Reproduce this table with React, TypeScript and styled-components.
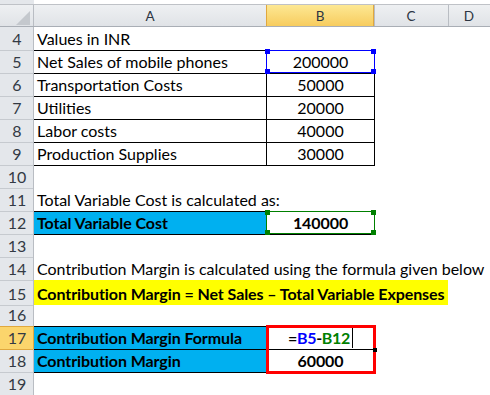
import React from 'react';
import styled, { createGlobalStyle, css } from 'styled-components';

const COLS = '34px 232px 108px 74px 1fr';
const HEAD_BG = '#e4e7eb';
const HEAD_LINE = '#b9bdc3';

const GlobalStyle = createGlobalStyle`
  html, body {
    margin: 0;
    padding: 0;
    background: #fff;
    overflow: hidden;
  }
`;

const Sheet = styled.div`
  position: relative;
  width: 490px;
  height: 395px;
  padding-top: 4px;
  box-sizing: border-box;
  overflow: hidden;
  font-family: Lato, 'Liberation Sans', sans-serif;
  background: linear-gradient(to right, ${HEAD_BG} 34px, #fff 34px);
`;

const HeaderRow = styled.div`
  display: grid;
  grid-template-columns: ${COLS};
  height: 23px;
  box-sizing: border-box;
  border-top: 1px solid #bfc2c7;
  border-bottom: 1px solid #a9aeb5;
  background: linear-gradient(#eef0f2, #e0e3e7);
`;

const Corner = styled.div`
  position: relative;
  box-shadow: inset -1px 0 0 ${HEAD_LINE};

  svg {
    position: absolute;
    right: 4px;
    bottom: 1px;
  }
`;

const ColHead = styled.div<{ $active?: boolean; $line?: boolean }>`
  display: flex;
  align-items: center;
  justify-content: center;
  font-size: 13.5px;
  color: #2c3542;
  ${({ $line }) => $line && css`box-shadow: inset 1px 0 0 ${HEAD_LINE};`}
  ${({ $active }) =>
    $active &&
    css`
      background: linear-gradient(#fde894, #f7cc5e);
      box-shadow: inset 1px 0 0 #e0a83e, inset -1px 0 0 #e0a83e;
    `}
`;

const Row = styled.div<{ $h?: number }>`
  display: grid;
  grid-template-columns: ${COLS};
  height: ${({ $h }) => $h ?? 23}px;
`;

const RowHead = styled.div<{ $active?: boolean }>`
  display: flex;
  align-items: flex-end;
  justify-content: center;
  padding-bottom: 2px;
  font-size: 16px;
  line-height: 19px;
  color: #333a44;
  box-shadow: inset -1px 0 0 ${HEAD_LINE}, 0 1px 0 #c6cacf;
  ${({ $active }) =>
    $active &&
    css`
      background: #fbd56c;
      box-shadow: inset -1px 0 0 #e0a83e, inset 0 1px 0 #e0a83e, 0 1px 0 #e0a83e;
    `}
`;

type Box = 'a' | 'b';

const boxLines: Record<Box, string> = {
  a: 'inset 0 1px 0 #000, 0 1px 0 #000',
  b: 'inset 0 1px 0 #000, inset 1px 0 0 #000, 1px 0 0 #000, 0 1px 0 #000, 1px 1px 0 #000',
};

const Cell = styled.div<{
  $fill?: string;
  $bold?: boolean;
  $center?: boolean;
  $box?: Box;
  $span?: number;
}>`
  display: flex;
  align-items: flex-end;
  justify-content: ${({ $center }) => ($center ? 'center' : 'flex-start')};
  padding: 0 2px 2px 3px;
  font-size: 16px;
  line-height: 19px;
  color: #000;
  white-space: nowrap;
  min-width: 0;
  font-weight: ${({ $bold }) => ($bold ? 700 : 400)};
  letter-spacing: ${({ $bold }) => ($bold ? '-0.08px' : 'normal')};
  background: ${({ $fill }) => $fill ?? 'transparent'};
  box-shadow: ${({ $box }) => ($box ? boxLines[$box] : 'none')};
  grid-column: span ${({ $span }) => $span ?? 1};
`;

const Formula = styled.span`
  display: inline-flex;
  align-items: flex-end;
  letter-spacing: -0.3px;
`;

const Ref = styled.span<{ $color: string }>`
  color: ${({ $color }) => $color};
`;

const Caret = styled.span`
  display: inline-block;
  width: 1px;
  height: 20px;
  margin: 0 0 -1px 2px;
  background: #000;
`;

const RefBox = styled.div<{ $color: string }>`
  position: absolute;
  box-sizing: border-box;
  border: 1px solid ${({ $color }) => $color};
`;

const Handle = styled.span<{ $color: string; $x: 'left' | 'right'; $y: 'top' | 'bottom' }>`
  position: absolute;
  width: 5px;
  height: 5px;
  background: ${({ $color }) => $color};
  ${({ $x }) => $x}: -2px;
  ${({ $y }) => $y}: -2px;
`;

const Highlight = styled.div`
  position: absolute;
  left: 266px;
  top: 325px;
  width: 110px;
  height: 49px;
  box-sizing: border-box;
  border: 3px solid #ff0000;
`;

const FillHandle = styled.div`
  position: absolute;
  left: 373px;
  top: 348px;
  width: 4px;
  height: 4px;
  background: #000;
`;

const CYAN = '#00b0f0';
const YELLOW = '#ffff00';
const BLUE = '#0000ff';
const GREEN = '#008000';

const RangeBox: React.FC<{ color: string; top: number }> = ({ color, top }) => (
  <RefBox $color={color} style={{ left: 266, top, width: 109, height: 23 }}>
    <Handle $color={color} $x="left" $y="top" />
    <Handle $color={color} $x="right" $y="top" />
    <Handle $color={color} $x="left" $y="bottom" />
    <Handle $color={color} $x="right" $y="bottom" />
  </RefBox>
);

const table: [string, string][] = [
  ['Net Sales of mobile phones', '200000'],
  ['Transportation Costs', '50000'],
  ['Utilities', '20000'],
  ['Labor costs', '40000'],
  ['Production Supplies', '30000'],
];

const App: React.FC = () => (
  <>
    <GlobalStyle />
    <Sheet>
      <HeaderRow>
        <Corner>
          <svg width="14" height="14" viewBox="0 0 14 14">
            <polygon points="14,0 14,14 0,14" fill="#c4c8cd" />
          </svg>
        </Corner>
        <ColHead>A</ColHead>
        <ColHead $active>B</ColHead>
        <ColHead $line>C</ColHead>
        <ColHead $line>D</ColHead>
      </HeaderRow>

      <Row>
        <RowHead>4</RowHead>
        <Cell>Values in INR</Cell>
      </Row>
      {table.map(([label, value], i) => (
        <Row key={label}>
          <RowHead>{i + 5}</RowHead>
          <Cell $box="a">{label}</Cell>
          <Cell $box="b" $center>
            {value}
          </Cell>
        </Row>
      ))}
      <Row>
        <RowHead>10</RowHead>
      </Row>
      <Row>
        <RowHead>11</RowHead>
        <Cell>Total Variable Cost is calculated as:</Cell>
      </Row>
      <Row>
        <RowHead>12</RowHead>
        <Cell $box="a" $fill={CYAN} $bold>
          Total Variable Cost
        </Cell>
        <Cell $box="b" $bold $center>
          140000
        </Cell>
      </Row>
      <Row>
        <RowHead>13</RowHead>
      </Row>
      <Row>
        <RowHead>14</RowHead>
        <Cell>Contribution Margin is calculated using the formula given below</Cell>
      </Row>
      <Row $h={25}>
        <RowHead>15</RowHead>
        <Cell $fill={YELLOW} $bold $span={3}>
          Contribution Margin = Net Sales – Total Variable Expenses
        </Cell>
      </Row>
      <Row $h={21}>
        <RowHead>16</RowHead>
      </Row>
      <Row>
        <RowHead $active>17</RowHead>
        <Cell $box="a" $fill={CYAN} $bold>
          Contribution Margin Formula
        </Cell>
        <Cell $box="b" $bold $center>
          <Formula>
            =<Ref $color={BLUE}>B5</Ref>-<Ref $color={GREEN}>B12</Ref>
            <Caret />
          </Formula>
        </Cell>
      </Row>
      <Row>
        <RowHead>18</RowHead>
        <Cell $box="a" $fill={CYAN} $bold>
          Contribution Margin
        </Cell>
        <Cell $box="b" $bold $center>
          60000
        </Cell>
      </Row>
      <Row>
        <RowHead>19</RowHead>
      </Row>

      <RangeBox color={BLUE} top={50} />
      <RangeBox color={GREEN} top={211} />
      <Highlight />
      <FillHandle />
    </Sheet>
  </>
);

export default App;
